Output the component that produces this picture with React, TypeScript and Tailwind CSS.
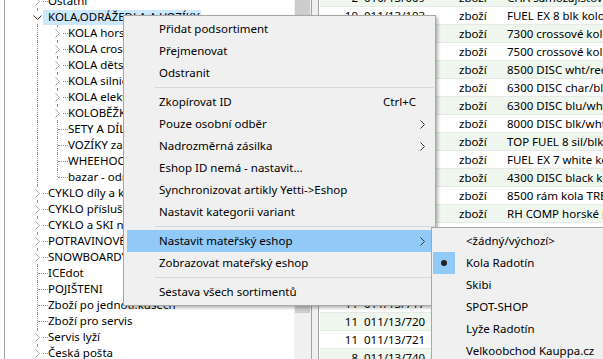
import React from 'react';

type TreeNode = {
  label: string;
  level: 0 | 1;
  kind: 'collapsed' | 'expanded' | 'leaf';
  selected?: boolean;
  last?: boolean;
};

const tree: TreeNode[] = [
  { label: 'Ostatni', level: 0, kind: 'collapsed' },
  { label: 'KOLA,ODRÁŽEDLA A VOZÍKY', level: 0, kind: 'expanded', selected: true },
  { label: 'KOLA horská', level: 1, kind: 'collapsed' },
  { label: 'KOLA crossová', level: 1, kind: 'collapsed' },
  { label: 'KOLA dětská', level: 1, kind: 'collapsed' },
  { label: 'KOLA silniční', level: 1, kind: 'collapsed' },
  { label: 'KOLA elektro', level: 1, kind: 'collapsed' },
  { label: 'KOLOBĚŽKY', level: 1, kind: 'collapsed' },
  { label: 'SETY A DÍLY', level: 1, kind: 'leaf' },
  { label: 'VOZÍKY za kolo', level: 1, kind: 'leaf' },
  { label: 'WHEEHOO odrážedla', level: 1, kind: 'leaf' },
  { label: 'bazar - odrážedla', level: 1, kind: 'leaf', last: true },
  { label: 'CYKLO díly a komponenty', level: 0, kind: 'collapsed' },
  { label: 'CYKLO příslušenství', level: 0, kind: 'collapsed' },
  { label: 'CYKLO a SKI nářadí', level: 0, kind: 'collapsed' },
  { label: 'POTRAVINOVÉ DOPLŇKY', level: 0, kind: 'collapsed' },
  { label: 'SNOWBOARDY', level: 0, kind: 'collapsed' },
  { label: 'ICEdot', level: 0, kind: 'leaf' },
  { label: 'POJIŠTENI', level: 0, kind: 'leaf' },
  { label: 'Zboží po jednotl.kusech', level: 0, kind: 'leaf' },
  { label: 'Zboží pro servis', level: 0, kind: 'leaf' },
  { label: 'Servis lyží', level: 0, kind: 'collapsed' },
  { label: 'Česká pošta', level: 0, kind: 'collapsed' },
];

const rows: [string, string, string, string][] = [
  ['2', '010/13/009', 'zboží', 'CHA samozajišťovací matice'],
  ['19', '011/13/193', 'zboží', 'FUEL EX 8 blk kolo TREK'],
  ['10', '011/13/280', 'zboží', '7300 crossové kolo TREK'],
  ['10', '011/13/281', 'zboží', '7500 crossové kolo TREK'],
  ['10', '011/13/300', 'zboží', '8500 DISC wht/red kolo'],
  ['10', '011/13/310', 'zboží', '6300 DISC char/blk kolo'],
  ['10', '011/13/311', 'zboží', '6300 DISC blu/wht kolo'],
  ['10', '011/13/320', 'zboží', '8000 DISC blk/wht kolo'],
  ['10', '011/13/330', 'zboží', 'TOP FUEL 8 sil/blk kolo'],
  ['10', '011/13/340', 'zboží', 'FUEL EX 7 white kolo'],
  ['10', '011/13/350', 'zboží', '4300 DISC black kolo'],
  ['10', '011/13/360', 'zboží', '8500 rám kola TREK'],
  ['10', '011/13/370', 'zboží', 'RH COMP horské kolo'],
  ['11', '011/13/700', 'zboží', 'kolo'],
  ['11', '011/13/701', 'zboží', 'kolo'],
  ['11', '011/13/710', 'zboží', 'kolo'],
  ['11', '011/13/711', 'zboží', 'kolo'],
  ['11', '011/13/717', 'zboží', 'kolo'],
  ['11', '011/13/720', 'zboží', 'kolo'],
  ['11', '011/13/721', 'zboží', 'kolo'],
  ['8', '011/13/740', 'zboží', 'kolo'],
];

type MenuEntry = { label?: string; sep?: boolean; sub?: boolean; shortcut?: string; active?: boolean };

const menu: MenuEntry[] = [
  { label: 'Přidat podsortiment' },
  { label: 'Přejmenovat' },
  { label: 'Odstranit' },
  { sep: true },
  { label: 'Zkopírovat ID', shortcut: 'Ctrl+C' },
  { label: 'Pouze osobní odběr', sub: true },
  { label: 'Nadrozměrná zásilka', sub: true },
  { label: 'Eshop ID nemá - nastavit...' },
  { label: 'Synchronizovat artikly Yetti->Eshop' },
  { label: 'Nastavit kategorii variant' },
  { sep: true },
  { label: 'Nastavit mateřský eshop', sub: true, active: true },
  { label: 'Zobrazovat mateřský eshop' },
  { sep: true },
  { label: 'Sestava všech sortimentů' },
];

const shops = ['<žádný/výchozí>', 'Kola Radotín', 'Skibi', 'SPOT-SHOP', 'Lyže Radotín', 'Velkoobchod Kauppa.cz'];

function Chevron({ open }: { open?: boolean }) {
  if (open) {
    return (
      <svg width="9" height="5" viewBox="0 0 9 5">
        <path d="M0.5 0.5 L4.5 4.5 L8.5 0.5" stroke="#3c3c3c" fill="none" />
      </svg>
    );
  }
  return (
    <svg width="5" height="9" viewBox="0 0 5 9">
      <path d="M0.5 0.5 L4.5 4.5 L0.5 8.5" stroke="#a6a6a6" fill="none" />
    </svg>
  );
}

function MenuArrow() {
  return (
    <svg width="5" height="9" viewBox="0 0 5 9">
      <path d="M0.5 0.5 L4.5 4.5 L0.5 8.5" stroke="#333" fill="none" />
    </svg>
  );
}

function TreeRow({ node }: { node: TreeNode }) {
  const line = 'border-[#8e8e8e] border-dotted';
  return (
    <div className="flex h-4 items-center">
      <div className="w-[26px] shrink-0" />
      {node.level === 1 && (
        <div className="grid h-full w-5 shrink-0">
          <div className={`col-start-1 row-start-1 ml-[6px] h-full border-l ${line}`} />
        </div>
      )}
      <div className="grid h-full w-[17px] shrink-0">
        <div className={`col-start-1 row-start-1 ml-[6px] border-l ${line} ${node.last ? 'h-1/2' : 'h-full'}`} />
        <div className={`col-start-1 row-start-1 ml-[7px] w-[10px] self-center border-t ${line}`} />
        {node.kind !== 'leaf' && (
          <div className="col-start-1 row-start-1 ml-[2px] flex h-[11px] w-[9px] items-center justify-center self-center bg-white">
            <Chevron open={node.kind === 'expanded'} />
          </div>
        )}
      </div>
      <span
        className={`-ml-[5px] flex h-[15px] items-center whitespace-nowrap pl-[5px] pr-[2px] ${node.selected ? 'bg-[#cce8ff]' : ''}`}
      >
        {node.label}
      </span>
    </div>
  );
}

export default function App() {
  return (
    <div className="relative flex h-[359px] w-[603px] overflow-hidden bg-white font-['Noto_Sans',sans-serif] text-[11.5px] text-black">
      {/* tree panel */}
      <div className="flex h-full w-[311px] shrink-0">
        <div className="w-1 shrink-0" />
        <div className="w-px shrink-0 bg-[#a0a0a0]" />
        <div className="min-w-0 flex-1 overflow-hidden">
          <div className="-mt-[7px]">
            {tree.map((n, i) => (
              <TreeRow key={i} node={n} />
            ))}
          </div>
        </div>
        <div className="flex w-[17px] shrink-0 flex-col bg-[#f0f0f0] px-px">
          <div className="h-[313px] bg-[#cdcdcd]" />
        </div>
      </div>

      {/* splitter */}
      <div className="w-px shrink-0 bg-[#a0a0a0]" />
      <div className="w-[6px] shrink-0 bg-[#f0f0f0]" />
      <div className="w-px shrink-0 bg-[#a0a0a0]" />

      {/* table */}
      <div className="min-w-0 flex-1 overflow-hidden bg-white pl-px">
        <div className="-mt-[11px]">
          {rows.map((r, i) => (
            <div
              key={i}
              className={`flex h-[18px] items-center whitespace-nowrap border-b border-[#e6e9e6] ${i % 2 === 0 ? 'bg-[#eff7ee]' : 'bg-white'}`}
            >
              <span className="w-[38px] shrink-0 text-right">{r[0]}</span>
              <span className="ml-[6px] w-[95px] shrink-0">{r[1]}</span>
              <span className="w-[48px] shrink-0">{r[2]}</span>
              <span>{r[3]}</span>
            </div>
          ))}
        </div>
      </div>

      {/* context menu */}
      <div className="absolute left-[123px] top-[15px] w-[313px] border border-[#a7a7a7] bg-[#f0f0f0] py-[2px] shadow-[2px_2px_3px_rgba(0,0,0,0.28)]">
        {menu.map((m, i) =>
          m.sep ? (
            <div key={i} className="flex h-[7px] items-center pl-[31px] pr-px">
              <div className="h-px w-full bg-[#d7d7d7]" />
            </div>
          ) : (
            <div
              key={i}
              className={`mx-[3px] flex h-[22px] items-center justify-between whitespace-nowrap pl-[32px] ${m.active ? 'bg-[#91c9f7]' : ''} ${m.shortcut ? 'pr-[16px]' : 'pr-[7px]'}`}
            >
              <span>{m.label}</span>
              {m.sub && <MenuArrow />}
              {m.shortcut && <span>{m.shortcut}</span>}
            </div>
          )
        )}
      </div>

      {/* submenu */}
      <div className="absolute left-[431px] top-[227px] w-[200px] border border-[#a7a7a7] bg-[#f0f0f0] py-[2px]">
        {shops.map((s, i) => (
          <div key={i} className="flex h-[22px] items-center whitespace-nowrap">
            <div
              className={`ml-px flex h-[22px] w-[22px] shrink-0 items-center justify-center ${i === 1 ? 'bg-[#91c9f7]' : ''}`}
            >
              {i === 1 && <div className="h-[6px] w-[6px] rounded-full bg-[#222]" />}
            </div>
            <span className="ml-[11px]">{s}</span>
          </div>
        ))}
      </div>
    </div>
  );
}
